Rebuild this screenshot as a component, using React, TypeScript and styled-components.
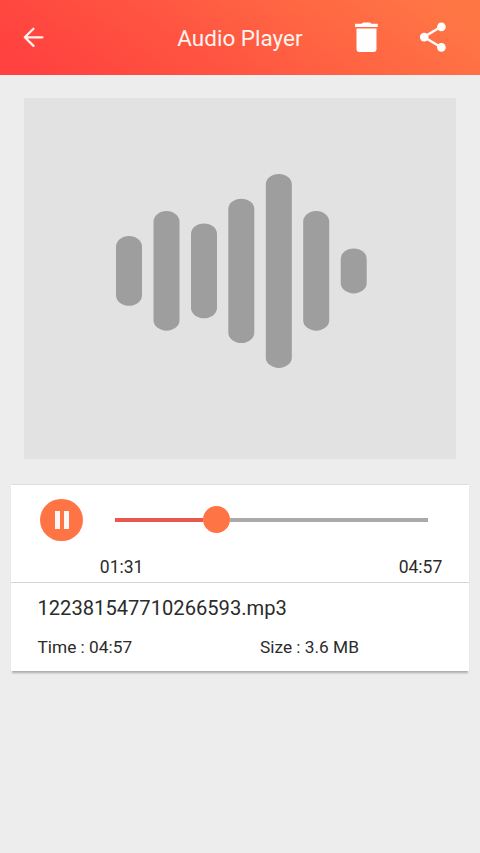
import React from "react";
import styled, { createGlobalStyle } from "styled-components";

const GlobalStyle = createGlobalStyle`
  * { box-sizing: border-box; }
  html, body { margin: 0; background: #ededed; }
  body { font-family: Roboto, "Liberation Sans", sans-serif; color: #2b2b2b; }
`;

const Screen = styled.main`
  display: flex;
  flex-direction: column;
  width: 480px;
  height: 853px;
  overflow: hidden;
  background: #ededed;
`;

const Header = styled.header`
  display: grid;
  grid-template-columns: 84px 1fr 66px 66px 14px;
  align-items: center;
  flex: none;
  height: 74.6px;
  background: linear-gradient(35deg, #ff423f 8%, #ff5341 38%, #ff6643 66%, #ff7645 92%);
`;

const IconButton = styled.button`
  display: flex;
  align-items: center;
  justify-content: center;
  height: 100%;
  padding: 0;
  border: 0;
  background: none;
  color: #fff;
  svg { display: block; flex: none; }
`;

const BackButton = styled(IconButton)`
  justify-content: flex-start;
  padding-left: 19px;
`;

const Title = styled.h1`
  margin: 2px 0 0;
  padding-left: 93.3px;
  font-size: 22.5px;
  font-weight: 400;
  line-height: 28px;
  white-space: nowrap;
  color: #fff3ee;
`;

const Artwork = styled.section`
  display: flex;
  align-items: center;
  justify-content: center;
  flex: none;
  width: 432px;
  height: 360.2px;
  margin: 23.9px 24px 0;
  background: #e2e2e2;
`;

const Wave = styled.svg`
  display: block;
  width: 432px;
  height: 360px;
`;

const Card = styled.section`
  flex: none;
  width: 458.5px;
  height: 187px;
  margin: 25.8px 0 0 10.8px;
  background: #fff;
  border-top: 1px solid #dedede;
  box-shadow: 0 3px 2px -1px rgba(0, 0, 0, 0.28);
`;

const Player = styled.div`
  height: 98px;
  padding-top: 13px;
  border-bottom: 1px solid #d6d6d6;
`;

const Controls = styled.div`
  display: flex;
  align-items: center;
  height: 43px;
  padding-left: 29.7px;
`;

const PauseButton = styled.button`
  display: flex;
  align-items: center;
  justify-content: center;
  gap: 4.3px;
  width: 42.8px;
  height: 42.8px;
  padding: 0;
  border: 0;
  border-radius: 50%;
  background: #ff7445;
`;

const PauseBar = styled.span`
  width: 4.7px;
  height: 17.5px;
  background: #fff8f2;
`;

const Track = styled.div`
  display: flex;
  align-items: center;
  width: 313.5px;
  margin-left: 31.3px;
`;

const Line = styled.div<{ $played?: boolean }>`
  flex: ${(p) => (p.$played ? "0 0 88.5px" : "1")};
  height: 4px;
  background: ${(p) => (p.$played ? "#e8584f" : "#aaaaaa")};
`;

const Thumb = styled.div`
  flex: none;
  width: 27px;
  height: 27px;
  border-radius: 50%;
  background: #ff7445;
`;

const Times = styled.div`
  display: flex;
  justify-content: space-between;
  padding: 15px 27px 0 89px;
  font-size: 17.5px;
  line-height: 22px;
`;

const Details = styled.div`
  padding: 10.8px 26.7px 0;
`;

const FileName = styled.div`
  font-size: 20.15px;
  line-height: 28px;
`;

const Facts = styled.div`
  display: grid;
  grid-template-columns: 222.5px 1fr;
  padding-top: 14.2px;
  font-size: 17.3px;
  line-height: 22px;
`;

const bars = [
  { x: 92, h: 69.7 },
  { x: 129.5, h: 119.6 },
  { x: 167, h: 94.8 },
  { x: 204.3, h: 144.4 },
  { x: 241.8, h: 194 },
  { x: 279.2, h: 119.6 },
  { x: 316.7, h: 45 },
];

export default function App() {
  return (
    <>
      <GlobalStyle />
      <Screen>
        <Header>
          <BackButton aria-label="Back">
            <svg width="28" height="28" viewBox="0 0 28 28" fill="none" stroke="#fff3ee" strokeWidth="2.3" strokeLinecap="round" strokeLinejoin="round">
              <path d="M23.4 14.3H6M14.5 5.7L5.8 14.3l8.7 8.6" />
            </svg>
          </BackButton>
          <Title>Audio Player</Title>
          <IconButton aria-label="Delete">
            <svg width="24" height="30" viewBox="0 0 24 30" fill="currentColor">
              <path d="M0 1.8H6.5L8.1.4h6.8l1.6 1.4h6.3v3.3H0zM1.5 6.5h20v20.4a3 3 0 0 1-3 3h-14a3 3 0 0 1-3-3z" />
            </svg>
          </IconButton>
          <IconButton aria-label="Share">
            <svg width="28" height="30" viewBox="0 0 28 30" fill="currentColor">
              <path d="M22 4.8L5 15l17 10.2" fill="none" stroke="currentColor" strokeWidth="2.5" />
              <circle cx="22.4" cy="4.9" r="4.3" />
              <circle cx="5.2" cy="15.1" r="4.3" />
              <circle cx="22.4" cy="25.4" r="4.3" />
            </svg>
          </IconButton>
        </Header>
        <Artwork>
          <Wave viewBox="0 0 432 360" fill="#9e9e9e" aria-hidden="true">
            {bars.map((b) => (
              <rect key={b.x} x={b.x} y={171.9 - b.h / 2} width="26" height={b.h} rx="13" ry="10.5" />
            ))}
          </Wave>
        </Artwork>
        <Card>
          <Player>
            <Controls>
              <PauseButton aria-label="Pause">
                <PauseBar />
                <PauseBar />
              </PauseButton>
              <Track>
                <Line $played />
                <Thumb />
                <Line />
              </Track>
            </Controls>
            <Times>
              <span>01:31</span>
              <span>04:57</span>
            </Times>
          </Player>
          <Details>
            <FileName>122381547710266593.mp3</FileName>
            <Facts>
              <span>Time : 04:57</span>
              <span>Size : 3.6 MB</span>
            </Facts>
          </Details>
        </Card>
      </Screen>
    </>
  );
}
